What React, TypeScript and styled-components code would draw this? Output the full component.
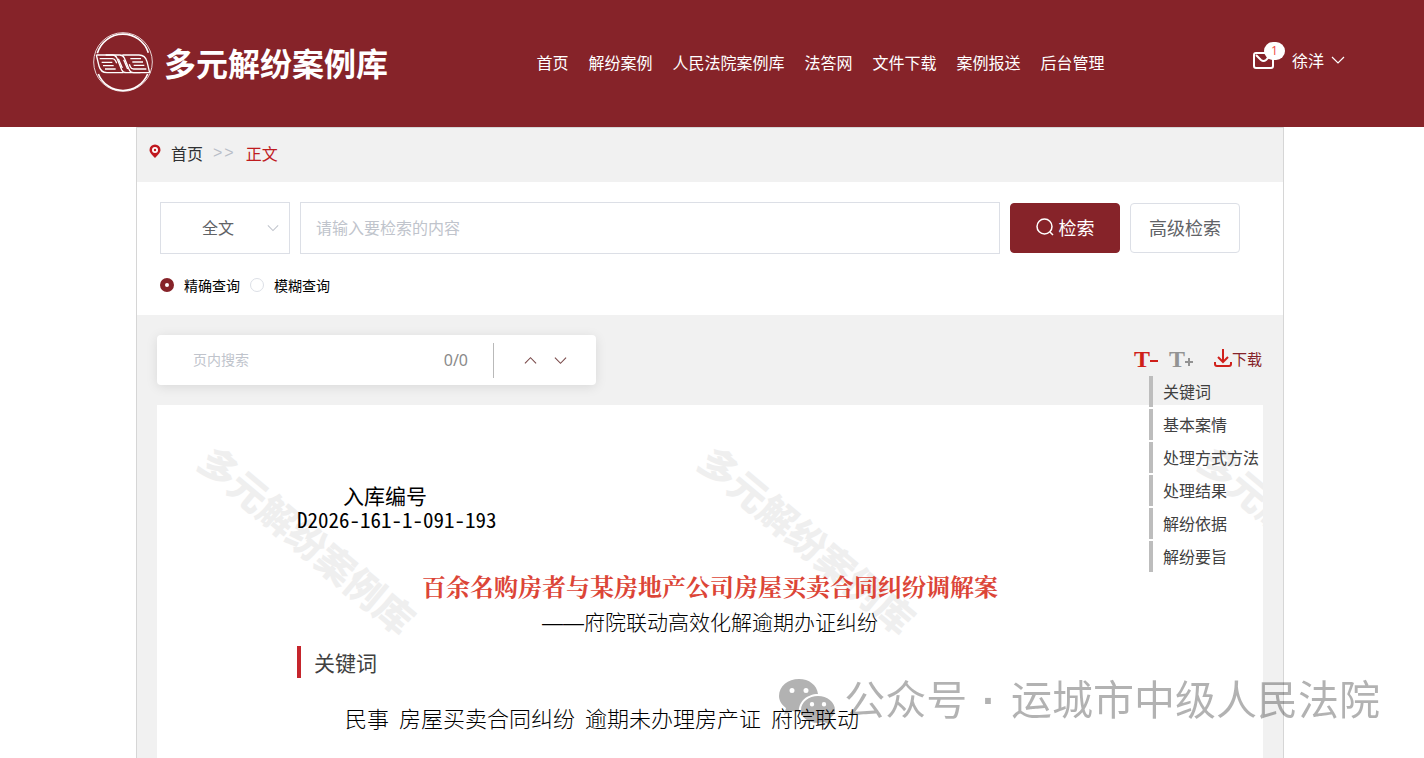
import React from 'react';
import styled, { createGlobalStyle } from 'styled-components';

const red = '#862329';
const grey = '#f1f1f1';
const line = '#dcdfe6';

const GlobalStyle = createGlobalStyle`
  *, *::before, *::after { box-sizing: border-box; }
  body {
    margin: 0;
    background: #fff;
    color: #303133;
    font-family: 'Noto Sans CJK SC', sans-serif;
    font-size: 16px;
    line-height: 24px;
  }
  button, input, select { font: inherit; color: inherit; }
  a { color: inherit; text-decoration: none; }
  h1, h2, p, ul { margin: 0; padding: 0; font-weight: 400; }
  ul { list-style: none; }
`;

const Page = styled.div`
  display: flex;
  flex-direction: column;
  min-height: 100vh;
  overflow: hidden;
`;

const Header = styled.header`
  display: flex;
  align-items: center;
  justify-content: space-between;
  height: 127px;
  padding: 0 79px 4px 93px;
  background: ${red};
  color: #fff;
`;

const Brand = styled.a`
  display: flex;
  align-items: center;
  gap: 11px;
  font-size: 32px;
  font-weight: 700;
  line-height: 48px;
`;

const Nav = styled.nav`
  display: flex;
  gap: 20px;
`;

const User = styled.div`
  display: flex;
  align-items: center;
  gap: 18px;
  padding-bottom: 4px;
`;

const Mail = styled.a`
  position: relative;
  display: flex;
`;

const Badge = styled.span`
  position: absolute;
  top: -9px;
  left: 11px;
  width: 21px;
  height: 18px;
  border-radius: 9px;
  background: #fff;
  color: #f0483e;
  font: 12px/18px 'Open Sans', sans-serif;
  text-align: center;
`;

const UserMenu = styled.button`
  display: flex;
  align-items: center;
  gap: 7px;
  padding: 0;
  border: 0;
  background: none;
  color: #fff;
`;

const Main = styled.main`
  display: flex;
  flex-direction: column;
  flex: 1;
  margin: 0 140px 0 136px;
  border: 1px solid #d6d6d6;
  border-bottom: 0;
  background: ${grey};
`;

const Crumbs = styled.nav`
  display: flex;
  align-items: center;
  gap: 10px;
  height: 54px;
  padding: 0 12px 5px;
`;

const Separator = styled.span`
  color: #b9bec8;
  font-family: 'Liberation Sans', sans-serif;
  letter-spacing: 2px;
`;

const Current = styled.span`
  color: #bf1c1f;
`;

const SearchForm = styled.form`
  display: flex;
  flex-direction: column;
  gap: 19px;
  padding: 20px 43px 18px 23px;
  background: #fff;
`;

const SearchRow = styled.div`
  display: flex;
  align-items: center;
  gap: 10px;
`;

const SelectWrap = styled.div`
  position: relative;
  width: 130px;
`;

const SelectArrow = styled.span`
  position: absolute;
  top: 20px;
  right: 11px;
  display: flex;
  pointer-events: none;
`;

const Select = styled.select`
  appearance: none;
  width: 100%;
  height: 52px;
  padding: 0 14px 2px 0;
  border: 1px solid ${line};
  border-radius: 0;
  background: #fff;
  color: #606266;
  text-align-last: center;
`;

const Query = styled.input`
  flex: 1;
  min-width: 0;
  height: 52px;
  padding: 0 15px 2px;
  border: 1px solid ${line};
  &::placeholder { color: #c0c4cc; opacity: 1; }
`;

const Button = styled.button<{ $primary?: boolean }>`
  display: flex;
  align-items: center;
  justify-content: center;
  gap: 5px;
  width: 110px;
  height: 50px;
  padding: 0 0 2px;
  border: 1px solid ${(p) => (p.$primary ? red : line)};
  border-radius: 4px;
  background: ${(p) => (p.$primary ? red : '#fff')};
  color: ${(p) => (p.$primary ? '#fff' : '#606266')};
  font-size: 18px;
`;

const RadioRow = styled.div`
  display: flex;
  gap: 10px;
`;

const RadioLabel = styled.label`
  display: flex;
  align-items: center;
  gap: 10px;
  color: #000;
  font-size: 14px;
`;

const Radio = styled.input`
  appearance: none;
  width: 14px;
  height: 14px;
  margin: 0;
  border: 1px solid ${line};
  border-radius: 50%;
  background: #fff;
  &:checked { border: 5px solid ${red}; }
`;

const Body = styled.div`
  position: relative;
  display: flex;
  flex-direction: column;
  flex: 1;
  gap: 20px;
  padding: 20px 20px 0;
`;

const Toolbar = styled.div`
  display: flex;
  align-items: center;
  justify-content: space-between;
`;

const Finder = styled.div`
  display: flex;
  align-items: center;
  width: 439px;
  height: 50px;
  padding: 0 23px 0 36px;
  border-radius: 4px;
  background: #fff;
  box-shadow: 0 2px 12px rgba(0, 0, 0, 0.1);
`;

const FindInput = styled.input`
  flex: 1;
  min-width: 0;
  padding: 0 0 2px;
  border: 0;
  font-size: 14px;
  &::placeholder { color: #c0c4cc; opacity: 1; }
`;

const Count = styled.span`
  padding-right: 25px;
  color: #8a8a8a;
  font-family: 'Noto Sans', sans-serif;
`;

const FindNav = styled.div`
  display: flex;
  align-items: center;
  gap: 17px;
  height: 35px;
  padding: 0 6px 0 30px;
  border-left: 1px solid #b9b9b9;
`;

const IconButton = styled.button<{ $color?: string }>`
  display: flex;
  align-items: center;
  padding: 0;
  border: 0;
  background: none;
  color: ${(p) => p.$color || '#7a4a4a'};
`;

const Tools = styled.div`
  display: flex;
  align-items: center;
  gap: 11px;
  padding: 0 1px 3px 0;
`;

const Letter = styled.span`
  font: 700 24px/28px 'Liberation Serif', serif;
`;

const Download = styled.a`
  display: flex;
  align-items: center;
  padding-left: 10px;
  color: ${red};
  font-size: 15px;
`;

const Toc = styled.ul`
  position: absolute;
  top: 61px;
  right: 20px;
  display: flex;
  flex-direction: column;
  gap: 2px;
  width: 114px;
  z-index: 1;
`;

const TocLink = styled.a`
  display: block;
  padding-left: 10px;
  border-left: 4px solid #bdbdbd;
  color: #404040;
  line-height: 31px;
  white-space: nowrap;
`;

const Paper = styled.article`
  position: relative;
  flex: 1;
  padding: 78px 140px 20px;
  background: #fff;
  color: #000;
`;

const Marks = styled.div`
  position: absolute;
  inset: 0;
  overflow: hidden;
`;

const MarkRow = styled.div`
  display: flex;
  width: 1500px;
  margin: 107px 0 0 -99px;
`;

const Mark = styled.span`
  flex: 0 0 500px;
  color: #efefef;
  font-size: 38px;
  font-weight: 900;
  line-height: 54px;
  text-align: center;
  transform: rotate(40deg);
`;

const Content = styled.div`
  position: relative;
`;

const CaseLabel = styled.p`
  padding-left: 46px;
  font-size: 21px;
`;

const CaseNumber = styled.p`
  font: 21px/24px 'Noto Sans Mono CJK SC', 'Noto Sans', sans-serif;
`;

const Title = styled.h1`
  margin-top: 37px;
  color: #dc4537;
  font-family: 'Noto Serif CJK SC', 'Noto Sans CJK SC', serif;
  font-size: 24px;
  font-weight: 700;
  line-height: 36px;
  text-align: center;
`;

const Subtitle = styled.p`
  font-family: 'Liberation Sans', 'Noto Sans CJK SC', sans-serif;
  font-size: 21px;
  font-weight: 300;
  line-height: 38px;
  text-align: center;
`;

const SectionTitle = styled.h2`
  margin-top: 4px;
  padding-left: 13px;
  border-left: 4px solid #c5252c;
  color: #404040;
  font-size: 21px;
  line-height: 32px;
`;

const Keywords = styled.p`
  display: flex;
  flex-wrap: wrap;
  gap: 10px;
  margin-top: 23px;
  padding-left: 48px;
  font-size: 22px;
  font-weight: 300;
  line-height: 32px;
`;

const Account = styled.div`
  position: fixed;
  right: 44px;
  bottom: 27px;
  z-index: 2;
  display: flex;
  align-items: center;
  gap: 9px;
  color: #000;
  font-family: 'Liberation Sans', 'Noto Sans CJK SC', sans-serif;
  font-size: 41px;
  line-height: 60px;
  opacity: 0.3;
  pointer-events: none;
`;

const AccountName = styled.span`
  display: flex;
  gap: 15px;
`;

const Dot = styled.span`
  font-weight: 700;
`;

function WingHalf({ rotated }: { rotated?: boolean }) {
  return (
    <g transform={rotated ? 'rotate(180 90 95.5)' : undefined}>
      <path d="M10 69h70q10 0 14 9l14 34q4 10 14 10h20" />
      <path d="M10 69l8 33q5 20 24 20h50" />
      <path d="M20 80h38q7 0 10 7l3 7M26 91h32M30 101h32M36 111h32" />
      <path d="M76 80l12 28" />
    </g>
  );
}

function Logo() {
  return (
    <svg width="60" height="60" viewBox="0 0 180 180" fill="none" stroke="#fff" strokeWidth="4">
      <circle cx="90" cy="90" r="88" strokeWidth="3" opacity="0.8" />
      <path d="M13 64a80 80 0 0 1 153-2M16 126a80 80 0 0 0 148 0" strokeWidth="5" />
      <WingHalf />
      <WingHalf rotated />
    </svg>
  );
}

function Chevron({ width, up, color }: { width: number; up?: boolean; color: string }) {
  return (
    <svg width={width} height={width} viewBox="0 0 14 14" fill="none" stroke={color} strokeWidth="1.2">
      <path d={up ? 'M1 10l6-6 6 6' : 'M1 4l6 6 6-6'} />
    </svg>
  );
}

const navItems = ['首页', '解纷案例', '人民法院案例库', '法答网', '文件下载', '案例报送', '后台管理'];
const tocItems = ['关键词', '基本案情', '处理方式方法', '处理结果', '解纷依据', '解纷要旨'];
const keywords = ['民事', '房屋买卖合同纠纷', '逾期未办理房产证', '府院联动'];

export default function App() {
  return (
    <Page>
      <GlobalStyle />
      <Header>
        <Brand href="#">
          <Logo />
          多元解纷案例库
        </Brand>
        <Nav>
          {navItems.map((item) => (
            <a href="#" key={item}>{item}</a>
          ))}
        </Nav>
        <User>
          <Mail href="#" aria-label="消息">
            <svg width="21" height="18" viewBox="0 0 21 18" fill="none" stroke="#fff" strokeWidth="2">
              <rect x="1" y="2" width="19" height="15" rx="2" />
              <path d="M3 4l5 5q2.500 2 5 0l5-5" />
            </svg>
            <Badge>1</Badge>
          </Mail>
          <UserMenu type="button">
            徐洋
            <Chevron width={14} color="#fff" />
          </UserMenu>
        </User>
      </Header>
      <Main>
        <Crumbs>
          <svg width="12" height="17" viewBox="0 0 12 17">
            <path d="M6 0.500a5.500 5.500 0 0 0-5.500 5.500c0 3 3 5 5.500 8 2.500-3 5.500-5 5.500-8A5.500 5.500 0 0 0 6 0.500z" fill="#c0191f" />
            <circle cx="6" cy="6" r="3" fill="#fff" />
            <circle cx="6" cy="6" r="1.200" fill="#c0191f" />
          </svg>
          <a href="#">首页</a>
          <Separator>&gt;&gt;</Separator>
          <Current>正文</Current>
        </Crumbs>
        <SearchForm onSubmit={(e) => e.preventDefault()}>
          <SearchRow>
            <SelectWrap>
              <Select aria-label="检索范围">
                <option>全文</option>
              </Select>
              <SelectArrow>
                <Chevron width={12} color="#c0c4cc" />
              </SelectArrow>
            </SelectWrap>
            <Query type="text" aria-label="检索内容" placeholder="请输入要检索的内容" />
            <Button $primary type="submit">
              <svg width="18" height="18" viewBox="0 0 18 18" fill="none" stroke="#fff" strokeWidth="1.500">
                <circle cx="8.500" cy="8.500" r="7.500" />
                <path d="M14 14l3 3" />
              </svg>
              检索
            </Button>
            <Button type="button">高级检索</Button>
          </SearchRow>
          <RadioRow>
            <RadioLabel>
              <Radio type="radio" name="mode" defaultChecked />
              精确查询
            </RadioLabel>
            <RadioLabel>
              <Radio type="radio" name="mode" />
              模糊查询
            </RadioLabel>
          </RadioRow>
        </SearchForm>
        <Body>
          <Toolbar>
            <Finder>
              <FindInput type="text" aria-label="页内搜索" placeholder="页内搜索" />
              <Count>0/0</Count>
              <FindNav>
                <IconButton type="button" aria-label="上一个">
                  <Chevron width={13} up color="#7a4a4a" />
                </IconButton>
                <IconButton type="button" aria-label="下一个">
                  <Chevron width={13} color="#7a4a4a" />
                </IconButton>
              </FindNav>
            </Finder>
            <Tools>
              <IconButton type="button" aria-label="缩小字号" $color="#cf1f1a">
                <Letter>T</Letter>
                <svg width="8" height="14" viewBox="0 0 8 14" stroke="currentColor" strokeWidth="2">
                  <path d="M0 9h8" />
                </svg>
              </IconButton>
              <IconButton type="button" aria-label="放大字号" $color="#939393">
                <Letter>T</Letter>
                <svg width="8" height="14" viewBox="0 0 8 14" stroke="currentColor" strokeWidth="2">
                  <path d="M0 10h8M4 6v8" />
                </svg>
              </IconButton>
              <Download href="#">
                <svg width="18" height="20" viewBox="0 0 18 20" fill="none" stroke="#d0211c" strokeWidth="2">
                  <path d="M9 0v13M4 8l5 5 5-5M1 13v2q0 2 2 2h12q2 0 2-2v-2" />
                </svg>
                下载
              </Download>
            </Tools>
          </Toolbar>
          <Toc>
            {tocItems.map((item) => (
              <li key={item}>
                <TocLink href="#">{item}</TocLink>
              </li>
            ))}
          </Toc>
          <Paper>
            <Marks aria-hidden="true">
              <MarkRow>
                <Mark>多元解纷案例库</Mark>
                <Mark>多元解纷案例库</Mark>
                <Mark>多元解纷案例库</Mark>
              </MarkRow>
            </Marks>
            <Content>
              <CaseLabel>入库编号</CaseLabel>
              <CaseNumber>D2026-161-1-091-193</CaseNumber>
              <Title>百余名购房者与某房地产公司房屋买卖合同纠纷调解案</Title>
              <Subtitle>——府院联动高效化解逾期办证纠纷</Subtitle>
              <SectionTitle>关键词</SectionTitle>
              <Keywords>
                {keywords.map((word) => (
                  <span key={word}>{word}</span>
                ))}
              </Keywords>
            </Content>
          </Paper>
        </Body>
      </Main>
      <Account>
        <svg width="56" height="46" viewBox="0 0 56 46">
          <path fillRule="evenodd" d="M20 1C9 1 0 8 0 18c0 5 3 9 7 12l-2 7 8-4 7 1c-1-10 8-18 19-18C38 7 30 1 20 1zM13 10a2.500 2.500 0 1 1 0 5 2.500 2.500 0 0 1 0-5zM27 10a2.500 2.500 0 1 1 0 5 2.500 2.500 0 0 1 0-5z" />
          <path fillRule="evenodd" d="M39 18c-9 0-17 6-17 14s8 13 17 13l6-1 6 3-1-6c3-2 6-5 6-9 0-8-8-14-17-14zM33 24a2.200 2.200 0 1 1 0 4.400 2.200 2.200 0 0 1 0-4.400zM45 24a2.200 2.200 0 1 1 0 4.400 2.200 2.200 0 0 1 0-4.400z" />
        </svg>
        <AccountName>
          <span>公众号</span>
          <Dot>·</Dot>
          <span>运城市中级人民法院</span>
        </AccountName>
      </Account>
    </Page>
  );
}
